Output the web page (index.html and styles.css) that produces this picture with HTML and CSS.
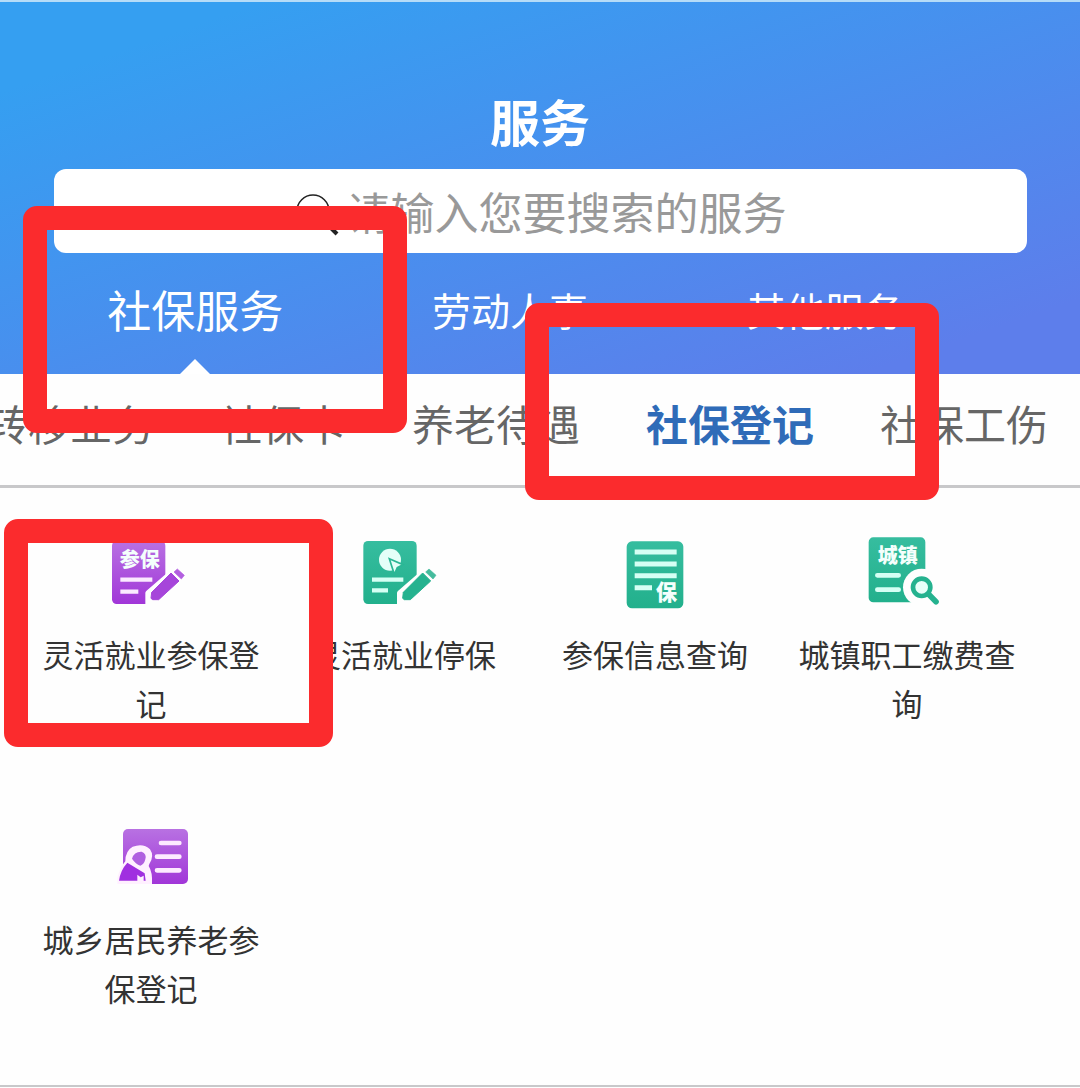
FILE: index.html
```html
<!DOCTYPE html>
<html lang="zh-CN">
<head>
  <meta charset="UTF-8">
  <meta name="viewport" content="width=device-width, initial-scale=1.0">
  <title>服务</title>
  <link rel="stylesheet" href="styles.css">
</head>
<body>
  <!-- Shared gradients -->
  <svg class="defs" aria-hidden="true">
    <defs>
      <linearGradient id="purple" x1="0" y1="0" x2="0" y2="1">
        <stop offset="0" stop-color="#b871e2" />
        <stop offset="1" stop-color="#a136d8" />
      </linearGradient>
      <linearGradient id="green" x1="0" y1="0" x2="0" y2="1">
        <stop offset="0" stop-color="#36bd9f" />
        <stop offset="1" stop-color="#22b08c" />
      </linearGradient>
    </defs>
  </svg>

  <header class="top">
    <h1 class="title">服务</h1>
    <form class="search">
      <label for="keyword" aria-label="搜索">
        <svg class="search-icon" viewBox="0 0 44 44" fill="none" stroke="#222">
          <circle cx="18" cy="22" r="16" stroke-width="1.5" />
          <path d="M30 33L42 45" stroke-width="4" />
        </svg>
      </label>
      <input id="keyword" type="text" placeholder="请输入您要搜索的服务">
    </form>
    <nav class="tabs">
      <button class="tab active">社保服务</button>
      <button class="tab">劳动人事</button>
      <button class="tab">其他服务</button>
    </nav>
  </header>

  <nav class="subtabs">
    <button class="subtab">转移业务</button>
    <button class="subtab">社保卡</button>
    <button class="subtab">养老待遇</button>
    <button class="subtab active">社保登记</button>
    <button class="subtab">社保工伤</button>
  </nav>

  <main class="services">
    <a class="service" href="#">
      <svg class="service-icon" viewBox="3 0 360 300">
        <rect x="66" y="48" width="160" height="189" rx="14" fill="url(#purple)" />
        <text class="icon-text" x="89" y="127" font-size="60">参保</text>
        <path d="M91 164H187M91 200H145" stroke="#fbeaff" stroke-width="13" />
        <path d="M174 240V204L258 131L283 154L230 240Z" fill="#fefefe" stroke="#fefefe" stroke-width="16" stroke-linejoin="round" />
        <path d="M183 220L185 202L243 144L267 168L206 224H188Z" fill="#a645da" stroke="#a645da" stroke-width="3" stroke-linejoin="round" />
        <path d="M252 141L262 132L283 151L274 162Z" fill="#b35fe0" stroke="#b35fe0" stroke-width="2" />
      </svg>
      <span class="service-name">灵活就业参保登记</span>
    </a>
    <a class="service" href="#">
      <svg class="service-icon" viewBox="9 0 360 300">
        <rect x="70" y="48" width="160" height="189" rx="14" fill="url(#green)" />
        <circle cx="150" cy="104" r="33" fill="#e4fff8" />
        <path d="M148 101L189 119L172 128L163 148Z" fill="#e4fff8" stroke="#2ab795" stroke-width="5" />
        <path d="M96 164H190M96 196H144" stroke="#d5fff4" stroke-width="13" />
        <path d="M179 240V204L263 131L288 154L235 240Z" fill="#fefefe" stroke="#fefefe" stroke-width="16" stroke-linejoin="round" />
        <path d="M188 220L190 202L248 144L272 168L211 224H193Z" fill="#25b28f" stroke="#25b28f" stroke-width="3" stroke-linejoin="round" />
        <path d="M257 141L267 132L288 151L279 162Z" fill="#45bb9d" stroke="#45bb9d" stroke-width="2" />
      </svg>
      <span class="service-name">灵活就业停保</span>
    </a>
    <a class="service" href="#">
      <svg class="service-icon" viewBox="-15 0 360 300">
        <rect x="80" y="49" width="170" height="201" rx="16" fill="url(#green)" />
        <path d="M104 81H230M104 117H230M104 152H230M104 188H156" stroke="#d5fff4" stroke-width="15" />
        <text class="icon-text" x="167" y="226" font-size="64">保</text>
      </svg>
      <span class="service-name">参保信息查询</span>
    </a>
    <a class="service" href="#">
      <svg class="service-icon" viewBox="-9 0 360 300">
        <rect x="56" y="37" width="170" height="195" rx="14" fill="url(#green)" />
        <text class="icon-text" x="83" y="114" font-size="60">城镇</text>
        <path d="M82 151H146M82 194H146" stroke="#d5fff4" stroke-width="14" stroke-linecap="round" />
        <circle cx="215" cy="187" r="56" fill="#fefefe" />
        <circle cx="215" cy="187" r="26" fill="#e8fff9" stroke="#25b28f" stroke-width="14" />
        <path d="M236 208L258 230" stroke="#25b28f" stroke-width="17" stroke-linecap="round" />
      </svg>
      <span class="service-name">城镇职工缴费查询</span>
    </a>
    <a class="service" href="#">
      <svg class="service-icon" viewBox="-27 0 360 300">
        <rect x="69" y="57" width="195" height="165" rx="15" fill="url(#purple)" />
        <path d="M183 99H238M171 140H238M171 181H238" stroke="#fdeaff" stroke-width="14" stroke-linecap="round" />
        <path d="M52 222V204Q60 172 76 154Q76 122 98 110Q130 98 150 118Q164 138 148 162L146 168Q158 186 156 222Z" fill="#fff0ff" />
        <path d="M57 212Q61 181 82 158L134 190L137 212H131V197L122 202L112 194V212Z" fill="#a02fe0" />
        <path d="M96 146Q102 124 125 125Q141 132 136 148Q132 164 121 167Q107 162 96 146Z" fill="#b05fe0" />
      </svg>
      <span class="service-name">城乡居民养老参保登记</span>
    </a>
  </main>

  <!-- Red highlight frames -->
  <div class="mark mark-tab"></div>
  <div class="mark mark-subtab"></div>
  <div class="mark mark-service"></div>
</body>
</html>
```
FILE: styles.css
```css
:root {
  --blue-start: #359ff1;
  --blue-end: #5d7eeb;
  --active: #2f6bb8;
  --text-dark: #333333;
  --text-grey: #666666;
  --line: #c8c8ca;
  --mark: #fb2b2d;
}
*, *::before, *::after { box-sizing: border-box; margin: 0; padding: 0; }
body {
  position: relative;
  font-family: 'Noto Sans CJK SC', sans-serif;
  background: #fefefe; color: var(--text-dark);
  overflow-x: hidden;
}
button { border: none; background: none; font-family: inherit; cursor: pointer; white-space: nowrap; }
.defs { position: absolute; width: 0; height: 0; }

.top {
  padding-top: 82px; border-top: 2px solid #b5dcf8;
  background: linear-gradient(to bottom right, var(--blue-start) 12%, var(--blue-end) 90%);
}
.title {
  font-size: 50px; line-height: 72px; font-weight: 700;
  color: #fff; text-align: center; margin-bottom: 13px;
}
.search {
  display: flex; justify-content: center; align-items: center; gap: 8px;
  height: 84px; margin: 0 53px 0 54px;
  background: #fff; border-radius: 12px;
}
.search label { display: flex; }
.search-icon { width: 44px; height: 44px; overflow: visible; }
.search input {
  width: 10em; height: 64px; border: none; outline: none; background: none;
  font-family: inherit; font-size: 44px; color: var(--text-dark);
}
.search input::placeholder { color: #999; opacity: 1; }

.tabs {
  display: grid; grid-template-columns: repeat(3, 1fr);
  height: 121px; padding: 0 98px 0 38px;
}
.tab { position: relative; padding-bottom: 10px; font-size: 39px; color: #fff; }
.tab.active { font-size: 44px; }
.tab.active::after {
  content: ''; position: absolute; left: 50%; bottom: 0;
  margin-left: -15px;
  border: 15px solid transparent; border-top: none; border-bottom-color: #fff;
}

.subtabs {
  display: flex; justify-content: flex-end; gap: 66px;
  height: 114px; padding: 0 32px 14px 0;
  border-bottom: 3px solid var(--line); overflow: hidden;
}
.subtab { flex: none; font-size: 42px; color: var(--text-grey); }
.subtab.active { font-weight: 700; color: var(--active); }

.services {
  display: grid; grid-template-columns: repeat(4, 1fr); row-gap: 83px;
  padding: 37px 47px 73px 25px; border-bottom: 2px solid var(--line);
}
.service {
  display: flex; flex-direction: column; align-items: center; gap: 4px;
  padding: 0 12px; color: inherit; text-decoration: none;
}
.service-icon { width: 120px; height: 100px; }
.icon-text { font-weight: 900; fill: #f4fffc; }
.service-name { font-size: 31px; line-height: 49px; text-align: center; }

.mark {
  position: absolute; border: 24px solid var(--mark);
  border-radius: 14px; pointer-events: none;
}
.mark-tab { left: 23px; top: 206px; width: 384px; height: 227px; }
.mark-subtab { left: 525px; top: 303px; width: 414px; height: 197px; }
.mark-service { left: 4px; top: 519px; width: 329px; height: 228px; }
```
